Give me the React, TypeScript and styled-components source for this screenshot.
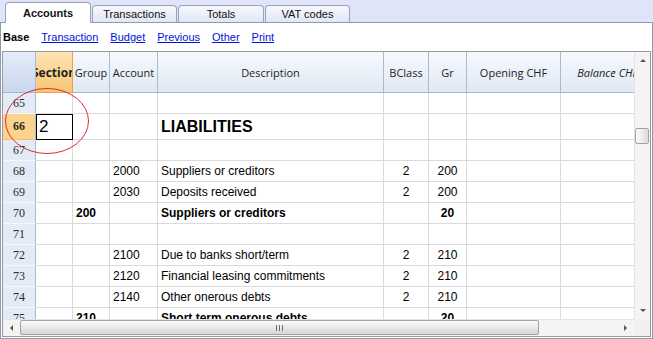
import React from 'react';
import styled, { createGlobalStyle, css } from 'styled-components';

const GlobalStyle = createGlobalStyle`
  html, body {
    margin: 0;
    padding: 0;
    background: #fff;
  }
  body {
    width: 653px;
    height: 339px;
    overflow: hidden;
    font-family: "Liberation Sans", Arial, sans-serif;
  }
`;

const Window = styled.div`
  position: relative;
  width: 653px;
  height: 339px;
  display: flex;
  flex-direction: column;
  background: #dfe4f8;
`;

const TabBar = styled.div`
  display: flex;
  align-items: flex-end;
  gap: 1px;
  height: 22px;
  padding-left: 5px;
  box-sizing: border-box;
`;

const Tab = styled.div<{ $active?: boolean; $w: number }>`
  width: ${(p) => p.$w}px;
  box-sizing: border-box;
  border: 1px solid #98a3ba;
  border-bottom: none;
  border-radius: 4px 4px 0 0;
  display: flex;
  align-items: center;
  justify-content: center;
  font-size: 11px;
  color: #111;
  ${(p) =>
    p.$active
      ? css`
          position: relative;
          z-index: 1;
          height: 21px;
          margin-bottom: -1px;
          background: #fff;
          font-weight: bold;
          padding-bottom: 1px;
        `
      : css`
          height: 17px;
          background: linear-gradient(#f7f8fd, #e2e7f5);
        `}
`;

const Panel = styled.div`
  flex: 1;
  display: flex;
  flex-direction: column;
  background: #fff;
  border: 1px solid #8f9ab2;
  padding: 0 1px 1px 1px;
  min-height: 0;
`;

const LinkBar = styled.div`
  display: flex;
  align-items: center;
  gap: 12px;
  height: 28px;
  padding-left: 1px;
  font-size: 11px;
`;

const BaseLabel = styled.span`
  font-weight: bold;
  color: #000;
`;

const ViewLink = styled.a`
  color: #0014d8;
  text-decoration: underline;
  cursor: pointer;
`;

const Grid = styled.div`
  flex: 1;
  display: flex;
  flex-direction: column;
  border: 1px solid #9a9a9a;
  min-height: 0;
`;

const Upper = styled.div`
  flex: 1;
  display: flex;
  min-height: 0;
`;

const Table = styled.div`
  width: 631px;
  display: flex;
  flex-direction: column;
  overflow: hidden;
`;

const HeaderRow = styled.div`
  display: flex;
  height: 41px;
  flex-shrink: 0;
`;

const Body = styled.div`
  flex: 1;
  overflow: hidden;
`;

const Row = styled.div<{ $h: number }>`
  display: flex;
  height: ${(p) => p.$h}px;
`;

const HeadCell = styled.div<{ $w: number; $tone?: 'orange' | 'corner'; $italic?: boolean }>`
  width: ${(p) => p.$w}px;
  flex-shrink: 0;
  box-sizing: border-box;
  display: flex;
  align-items: center;
  justify-content: center;
  overflow: hidden;
  white-space: nowrap;
  font-family: "Open Sans", "Noto Sans", sans-serif;
  font-size: 11px;
  color: #1e1e1e;
  font-style: ${(p) => (p.$italic ? 'italic' : 'normal')};
  border-right: 1px solid #a8bbd6;
  border-bottom: 1px solid #a3b7d2;
  background: linear-gradient(#f7f9fd, #dfe8f4);
  ${(p) =>
    p.$tone === 'orange' &&
    css`
      background: linear-gradient(#fde4b4, #f8c673);
      border-right-color: #f0a23a;
      border-bottom-color: #e9a850;
      font-weight: 700;
      font-size: 12px;
    `}
  ${(p) =>
    p.$tone === 'corner' &&
    css`
      background: linear-gradient(#e6ecfa, #c9d6ef);
      border-right-color: #a8bbd6;
    `}
`;

const RowHead = styled.div<{ $active?: boolean }>`
  width: 33px;
  flex-shrink: 0;
  box-sizing: border-box;
  display: flex;
  align-items: center;
  justify-content: center;
  font-family: "Liberation Serif", "Times New Roman", serif;
  font-size: 12px;
  color: #2a2a2a;
  background: ${(p) => (p.$active ? '#fbd38c' : '#e3ebf6')};
  font-weight: ${(p) => (p.$active ? 'bold' : 'normal')};
  border-right: 1px solid #a8bbd6;
  border-bottom: 1px solid ${(p) => (p.$active ? '#f3c070' : '#f4f7fb')};
`;

const Cell = styled.div<{
  $w: number;
  $align?: 'left' | 'center';
  $bold?: boolean;
  $big?: boolean;
  $selected?: boolean;
}>`
  width: ${(p) => p.$w}px;
  flex-shrink: 0;
  box-sizing: border-box;
  display: flex;
  align-items: center;
  justify-content: ${(p) => (p.$align === 'center' ? 'center' : 'flex-start')};
  padding: 0 3px;
  overflow: hidden;
  white-space: nowrap;
  font-size: ${(p) => (p.$big ? '16px' : '12px')};
  font-weight: ${(p) => (p.$bold ? 'bold' : 'normal')};
  color: #000;
  border-right: 1px solid #dadada;
  border-bottom: 1px solid #dadada;
  ${(p) =>
    p.$selected &&
    css`
      outline: 1px solid #000;
      outline-offset: -1px;
      font-size: 17px;
      font-weight: normal;
    `}
`;

const VScroll = styled.div`
  width: 16px;
  display: flex;
  flex-direction: column;
  background: #f4f4f4;
  border-left: 1px solid #e4e4e4;
  box-sizing: border-box;
`;

const ArrowBox = styled.div<{ $w: number; $h: number }>`
  width: ${(p) => p.$w}px;
  height: ${(p) => p.$h}px;
  flex-shrink: 0;
  display: flex;
  align-items: center;
  justify-content: center;
`;

const Arrow = styled.span<{ $dir: 'up' | 'down' | 'left' | 'right' }>`
  width: 0;
  height: 0;
  ${(p) =>
    p.$dir === 'up' &&
    css`
      border-left: 3px solid transparent;
      border-right: 3px solid transparent;
      border-bottom: 3px solid #555;
    `}
  ${(p) =>
    p.$dir === 'down' &&
    css`
      border-left: 3px solid transparent;
      border-right: 3px solid transparent;
      border-top: 3px solid #555;
    `}
  ${(p) =>
    p.$dir === 'left' &&
    css`
      border-top: 3px solid transparent;
      border-bottom: 3px solid transparent;
      border-right: 3px solid #555;
    `}
  ${(p) =>
    p.$dir === 'right' &&
    css`
      border-top: 3px solid transparent;
      border-bottom: 3px solid transparent;
      border-left: 3px solid #555;
    `}
`;

const Track = styled.div<{ $vertical?: boolean }>`
  flex: 1;
  display: flex;
  flex-direction: ${(p) => (p.$vertical ? 'column' : 'row')};
`;

const VThumb = styled.div<{ $offset: number }>`
  margin: ${(p) => p.$offset}px 1px 0 0;
  height: 16px;
  box-sizing: border-box;
  border: 1px solid #a2a2a2;
  border-radius: 2px;
  background: linear-gradient(90deg, #fbfbfb, #dcdcdc);
`;

const HScrollRow = styled.div`
  display: flex;
  height: 17px;
  flex-shrink: 0;
`;

const HScroll = styled.div`
  width: 631px;
  display: flex;
  background: #f4f4f4;
  border-top: 1px solid #e4e4e4;
  box-sizing: border-box;
`;

const HThumb = styled.div<{ $w: number }>`
  width: ${(p) => p.$w}px;
  margin: 0 0 1px 0;
  box-sizing: border-box;
  border: 1px solid #a2a2a2;
  border-radius: 2px;
  background: linear-gradient(#fbfbfb, #d6d6d6);
  display: flex;
  align-items: center;
  justify-content: center;
  gap: 2px;
`;

const Grip = styled.span`
  width: 1px;
  height: 6px;
  background: #6f6f6f;
`;

const Corner = styled.div`
  flex: 1;
  background: #f0f0f0;
`;

const Annotation = styled.svg`
  position: absolute;
  left: 4px;
  top: 87px;
  width: 86px;
  height: 68px;
  pointer-events: none;
  overflow: visible;
`;

type ColKey = 'section' | 'group' | 'account' | 'desc' | 'bclass' | 'gr' | 'opening' | 'balance';

type Column = {
  key: ColKey;
  label: string;
  w: number;
  align?: 'left' | 'center';
  tone?: 'orange';
  italic?: boolean;
};

const columns: Column[] = [
  { key: 'section', label: 'Section', w: 37, tone: 'orange' },
  { key: 'group', label: 'Group', w: 37 },
  { key: 'account', label: 'Account', w: 48 },
  { key: 'desc', label: 'Description', w: 226 },
  { key: 'bclass', label: 'BClass', w: 45, align: 'center' },
  { key: 'gr', label: 'Gr', w: 38, align: 'center' },
  { key: 'opening', label: 'Opening CHF', w: 94 },
  { key: 'balance', label: 'Balance CHF', w: 94, italic: true },
];

type Line = {
  n: number;
  h?: number;
  bold?: boolean;
  active?: boolean;
  cells: Partial<Record<ColKey, string>>;
};

const lines: Line[] = [
  { n: 65, cells: {} },
  { n: 66, h: 26, active: true, cells: { section: '2', desc: 'LIABILITIES' } },
  { n: 67, cells: {} },
  { n: 68, cells: { account: '2000', desc: 'Suppliers or creditors', bclass: '2', gr: '200' } },
  { n: 69, cells: { account: '2030', desc: 'Deposits received', bclass: '2', gr: '200' } },
  { n: 70, bold: true, cells: { group: '200', desc: 'Suppliers or creditors', gr: '20' } },
  { n: 71, cells: {} },
  { n: 72, cells: { account: '2100', desc: 'Due to banks short/term', bclass: '2', gr: '210' } },
  { n: 73, cells: { account: '2120', desc: 'Financial leasing commitments', bclass: '2', gr: '210' } },
  { n: 74, cells: { account: '2140', desc: 'Other onerous debts', bclass: '2', gr: '210' } },
  { n: 75, bold: true, cells: { group: '210', desc: 'Short term onerous debts', gr: '20' } },
];

const tabs = [
  { label: 'Accounts', w: 86, active: true },
  { label: 'Transactions', w: 85 },
  { label: 'Totals', w: 86 },
  { label: 'VAT codes', w: 85 },
];

const views = ['Transaction', 'Budget', 'Previous', 'Other', 'Print'];

const App: React.FC = () => (
  <>
    <GlobalStyle />
    <Window>
      <TabBar>
        {tabs.map((t) => (
          <Tab key={t.label} $w={t.w} $active={t.active}>
            {t.label}
          </Tab>
        ))}
      </TabBar>
      <Panel>
        <LinkBar>
          <BaseLabel>Base</BaseLabel>
          {views.map((v) => (
            <ViewLink key={v}>{v}</ViewLink>
          ))}
        </LinkBar>
        <Grid>
          <Upper>
            <Table>
              <HeaderRow>
                <HeadCell $w={33} $tone="corner" />
                {columns.map((c) => (
                  <HeadCell key={c.key} $w={c.w} $tone={c.tone} $italic={c.italic}>
                    {c.label}
                  </HeadCell>
                ))}
              </HeaderRow>
              <Body>
                {lines.map((l) => (
                  <Row key={l.n} $h={l.h ?? 21}>
                    <RowHead $active={l.active}>{l.n}</RowHead>
                    {columns.map((c) => (
                      <Cell
                        key={c.key}
                        $w={c.w}
                        $align={c.align}
                        $bold={l.bold || (l.active && c.key === 'desc')}
                        $big={l.active && c.key === 'desc'}
                        $selected={l.active && c.key === 'section'}
                      >
                        {l.cells[c.key]}
                      </Cell>
                    ))}
                  </Row>
                ))}
              </Body>
            </Table>
            <VScroll>
              <ArrowBox $w={15} $h={17}>
                <Arrow $dir="up" />
              </ArrowBox>
              <Track $vertical>
                <VThumb $offset={59} />
              </Track>
              <ArrowBox $w={15} $h={17}>
                <Arrow $dir="down" />
              </ArrowBox>
            </VScroll>
          </Upper>
          <HScrollRow>
            <HScroll>
              <ArrowBox $w={17} $h={16}>
                <Arrow $dir="left" />
              </ArrowBox>
              <Track>
                <HThumb $w={519}>
                  <Grip />
                  <Grip />
                  <Grip />
                </HThumb>
              </Track>
              <ArrowBox $w={17} $h={16}>
                <Arrow $dir="right" />
              </ArrowBox>
            </HScroll>
            <Corner />
          </HScrollRow>
        </Grid>
      </Panel>
      <Annotation viewBox="0 0 86 68">
        <ellipse cx="43" cy="34" rx="41.5" ry="32.5" fill="none" stroke="#e3263a" strokeWidth="1" />
      </Annotation>
    </Window>
  </>
);

export default App;
